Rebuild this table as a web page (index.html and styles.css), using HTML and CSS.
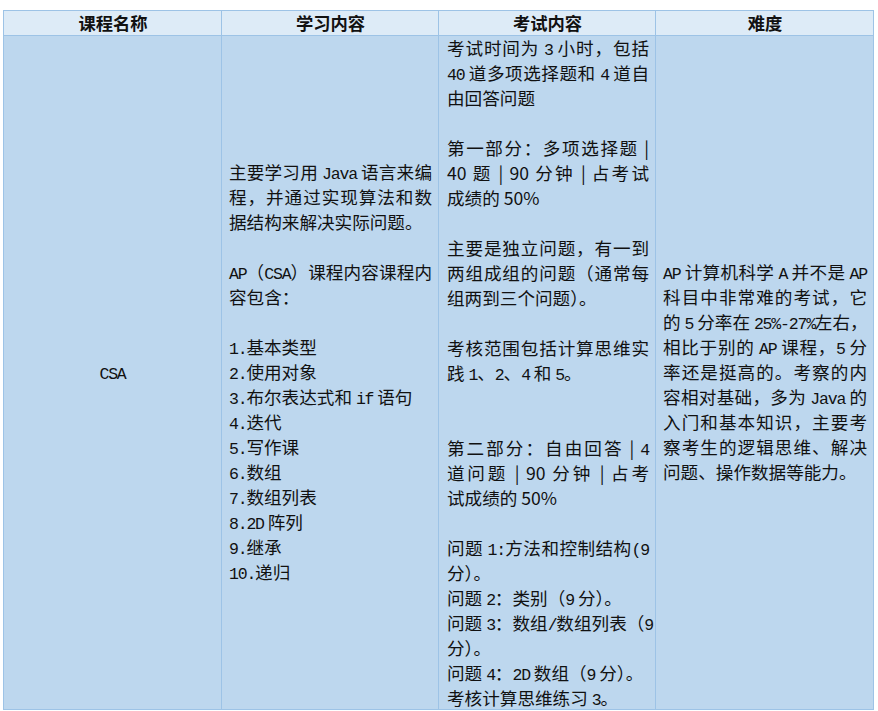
FILE: index.html
```html
<!DOCTYPE html>
<html lang="zh-CN">
<head>
<meta charset="utf-8">
<title>AP CSA</title>
<link rel="stylesheet" href="styles.css">
</head>
<body>
<div class="page">
<table class="course">
  <colgroup>
    <col class="c1"><col class="c2"><col class="c3"><col class="c4">
  </colgroup>
  <thead>
    <tr>
      <th>课程名称</th>
      <th>学习内容</th>
      <th>考试内容</th>
      <th>难度</th>
    </tr>
  </thead>
  <tbody>
    <tr>
      <td class="name"><span class="lat">CSA</span></td>
      <td class="text">
        <span class="ln fill">主要学习用 <span class="lat">Java</span> 语言来编</span>
        <span class="ln fill">程，并通过实现算法和数</span>
        <span class="ln">据结构来解决实际问题。</span>
        <span class="ln blank"></span>
        <span class="ln fill"><span class="lat">AP</span>（<span class="lat">CSA</span>）课程内容课程内</span>
        <span class="ln">容包含：</span>
        <span class="ln blank"></span>
        <span class="ln"><span class="lat">1.</span>基本类型</span>
        <span class="ln"><span class="lat">2.</span>使用对象</span>
        <span class="ln"><span class="lat">3.</span>布尔表达式和 <span class="lat">if</span> 语句</span>
        <span class="ln"><span class="lat">4.</span>迭代</span>
        <span class="ln"><span class="lat">5.</span>写作课</span>
        <span class="ln"><span class="lat">6.</span>数组</span>
        <span class="ln"><span class="lat">7.</span>数组列表</span>
        <span class="ln"><span class="lat">8.2D</span> 阵列</span>
        <span class="ln"><span class="lat">9.</span>继承</span>
        <span class="ln"><span class="lat">10.</span>递归</span>
      </td>
      <td class="text top">
        <span class="ln fill">考试时间为 <span class="lat">3</span> 小时，包括</span>
        <span class="ln fill"><span class="lat">40</span> 道多项选择题和 <span class="lat">4</span> 道自</span>
        <span class="ln">由回答问题</span>
        <span class="ln blank"></span>
        <span class="ln fill">第一部分：多项选择题 |</span>
        <span class="ln fill">40 题 | 90 分钟 | 占考试</span>
        <span class="ln">成绩的 50%</span>
        <span class="ln blank"></span>
        <span class="ln fill">主要是独立问题，有一到</span>
        <span class="ln fill">两组成组的问题（通常每</span>
        <span class="ln">组两到三个问题）。</span>
        <span class="ln blank"></span>
        <span class="ln fill">考核范围包括计算思维实</span>
        <span class="ln">践 <span class="lat">1</span>、<span class="lat">2</span>、<span class="lat">4</span> 和 <span class="lat">5</span>。</span>
        <span class="ln blank"></span>
        <span class="ln blank"></span>
        <span class="ln fill">第二部分：自由回答 | <span class="lat">4</span></span>
        <span class="ln fill">道问题 | 90 分钟 | 占考</span>
        <span class="ln">试成绩的 50%</span>
        <span class="ln blank"></span>
        <span class="ln fill">问题 <span class="lat">1:</span>方法和控制结构<span class="lat">(9</span></span>
        <span class="ln">分）。</span>
        <span class="ln">问题 <span class="lat">2</span>：类别（<span class="lat">9</span> 分）。</span>
        <span class="ln fill">问题 <span class="lat">3</span>：数组<span class="lat">/</span>数组列表（<span class="lat">9</span></span>
        <span class="ln">分）。</span>
        <span class="ln">问题 <span class="lat">4</span>：<span class="lat">2D</span> 数组（<span class="lat">9</span> 分）。</span>
        <span class="ln last">考核计算思维练习 <span class="lat">3</span>。</span>
      </td>
      <td class="text">
        <span class="ln fill"><span class="lat">AP</span> 计算机科学 <span class="lat">A</span> 并不是 <span class="lat">AP</span></span>
        <span class="ln fill">科目中非常难的考试，它</span>
        <span class="ln fill">的 <span class="lat">5</span> 分率在 <span class="lat">25%-27%</span>左右，</span>
        <span class="ln fill">相比于别的 <span class="lat">AP</span> 课程，<span class="lat">5</span> 分</span>
        <span class="ln fill">率还是挺高的。考察的内</span>
        <span class="ln fill">容相对基础，多为 <span class="lat">Java</span> 的</span>
        <span class="ln fill">入门和基本知识，主要考</span>
        <span class="ln fill">察考生的逻辑思维、解决</span>
        <span class="ln">问题、操作数据等能力。</span>
      </td>
    </tr>
  </tbody>
</table>
</div>
</body>
</html>
```
FILE: styles.css
```css
html, body {
  margin: 0;
  padding: 0;
  background: #ffffff;
}

.page {
  padding: 10px 0 0 3px;
}

.course {
  border-collapse: collapse;
  table-layout: fixed;
  width: 870px;
  font-family: "Noto Sans CJK SC", sans-serif;
  font-size: 17.6px;
  color: #111111;
}

.c1 { width: 218px; }
.c2 { width: 217px; }
.c3 { width: 217px; }
.c4 { width: 218px; }

.course th,
.course td {
  border: 1px solid #9dc3e6;
  padding: 0 6px 0 7px;
  line-height: 25px;
}

.course th {
  background: #ddebf7;
  height: 24px;
  font-weight: bold;
  text-align: center;
  font-size: 17.3px;
  line-height: 24px;
}

.course td {
  background: #bdd7ee;
  vertical-align: middle;
}

.course td.top {
  padding-left: 8px;
  vertical-align: top;
}

.course td.name {
  text-align: center;
  padding: 0;
}

.lat {
  font-family: "Liberation Mono", monospace;
  font-size: 16.5px;
  letter-spacing: -1.2px;
}

.ln {
  display: block;
  height: 25px;
  line-height: 24px;
  white-space: nowrap;
}

.ln.fill {
  text-align: justify;
  text-align-last: justify;
}

.ln.last {
  height: 23px;
}
```
